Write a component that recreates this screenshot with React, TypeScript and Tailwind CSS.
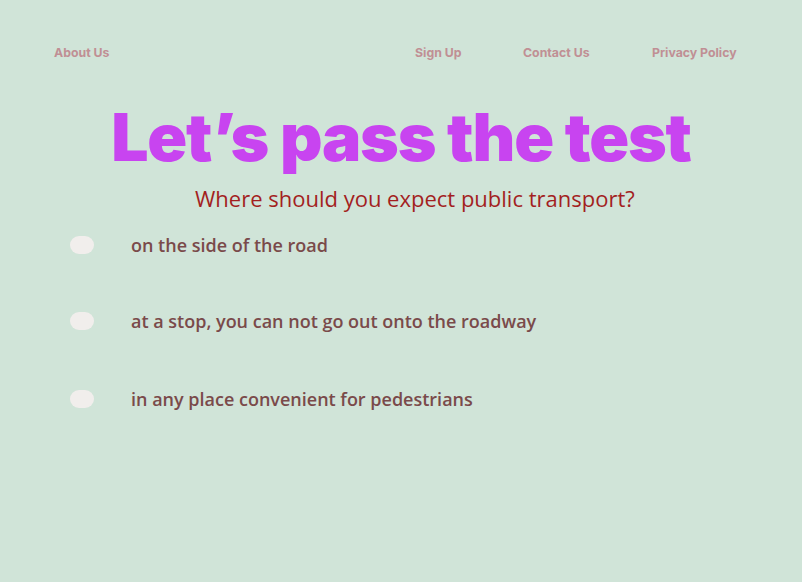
import React from "react";

const options = [
  { t: "on the side of the road", m: "mt-[21px]" },
  { t: "at a stop, you can not go out onto the roadway", m: "mt-[52px]" },
  { t: "in any place convenient for pedestrians", m: "mt-[54px]" },
];

export default function App() {
  return (
    <div className="w-[802px] h-[582px] bg-[#d0e4d8] overflow-hidden">
      <nav className="flex items-center pt-[45px] pl-[54px] text-[12.3px] font-bold text-[#c08f94] font-['Inter',sans-serif] h-[60px] leading-[16px]">
        <span className="w-[361px]">About Us</span>
        <span className="w-[108px]">Sign Up</span>
        <span className="w-[129px]">Contact Us</span>
        <span>Privacy Policy</span>
      </nav>
      <h1 className="mt-[42px] text-center text-[66px] leading-[70px] font-black tracking-[-1.25px] text-[#c844f0] font-['Inter',sans-serif]">
        Let’s pass the test
      </h1>
      <p className="mt-[12px] pl-[195px] text-[22px] leading-[28px] text-[#a31f1f] font-['Open_Sans',sans-serif]">
        Where should you expect public transport?
      </p>
      <ul className="pl-[70px] flex flex-col">
        {options.map((o) => (
          <li key={o.t} className={`flex items-center h-[24px] ${o.m}`}>
            <span className="w-[24px] h-[18px] rounded-full bg-[#f1eeec] shrink-0" />
            <span className="ml-[37px] text-[18px] font-semibold text-[#7a4a4a] font-['Open_Sans',sans-serif]">
              {o.t}
            </span>
          </li>
        ))}
      </ul>
    </div>
  );
}
